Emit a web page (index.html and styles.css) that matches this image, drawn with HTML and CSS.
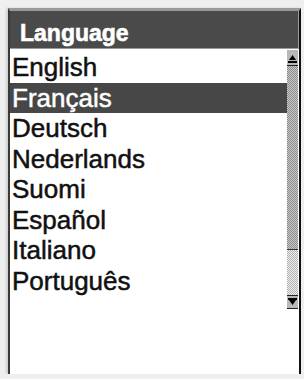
FILE: index.html
```html
<!DOCTYPE html>
<html>
<head>
    <meta charset="UTF-8">
    <title>Language</title>
    <link rel="stylesheet" href="styles.css">
</head>
<body>
<div class="panel">
    <div class="title">Language</div>
    <div class="body">
        <ul class="list">
            <li>English</li>
            <li class="on">Français</li>
            <li>Deutsch</li>
            <li>Nederlands</li>
            <li>Suomi</li>
            <li>Español</li>
            <li>Italiano</li>
            <li>Português</li>
        </ul>
        <div class="scroll">
            <div class="arrow">
                <svg width="11" height="15" viewBox="0 0 11 15"><polygon points="2,10 9,10 5.5,5" fill="#000"/><rect x="1" y="11" width="9" height="2" fill="#000"/></svg>
            </div>
            <div class="thumb"></div>
            <div class="track"></div>
            <div class="arrow down">
                <svg width="11" height="13" viewBox="0 0 11 13"><rect x="1" y="2" width="9" height="2" fill="#000"/><polygon points="2,4 9,4 5.5,9" fill="#000"/></svg>
            </div>
        </div>
    </div>
</div>
</body>
</html>
```

FILE: styles.css
```css
* {
    margin: 0;
    padding: 0;
    box-sizing: border-box;
}

ul, li {
    list-style: none;
}

body {
    background: #efefef;
    font-family: "Liberation Sans", Arial, sans-serif;
}

.panel {
    display: flex;
    flex-direction: column;
    margin: 8px 0 0 8px;
    width: 293px;
    height: 366px;
    background: #fff;
    border-top: 3px solid #9a9a9a;
    border-left: 2px solid #3a3a3a;
    border-right: 2px solid #111;
    box-shadow: -2px 0 2px #cfcfcf;
}

.title {
    height: 38px;
    padding: 7px 0 0 10px;
    background: #4a4a4a;
    border-bottom: 1px solid #9a9a9a;
    border-right: 1px solid #9a9a9a;
    color: #fff;
    font-size: 23px;
    font-weight: bold;
    line-height: 30px;
    -webkit-text-stroke: 0.6px #fff;
}

.body {
    display: flex;
    flex: 1;
    align-items: flex-start;
}

.list {
    flex: 1;
    padding-top: 3px;
}

.list li {
    height: 30.5px;
    padding-left: 2px;
    color: #111;
    font-size: 26px;
    line-height: 30px;
    -webkit-text-stroke: 0.5px #111;
}

.list li.on {
    background: #474747;
    color: #fff;
    -webkit-text-stroke: 0.5px #fff;
}

.scroll {
    display: flex;
    flex-direction: column;
    width: 11px;
    margin: 1px 1px 0 0;
}

.arrow {
    height: 16px;
    background: #b8b8b8;
    border-bottom: 1px solid #222;
}

.arrow svg {
    display: block;
}

.arrow.down {
    height: 14px;
    border-top: 1px solid #222;
}

.thumb {
    height: 184px;
    background: repeating-conic-gradient(#8c8c8c 0 25%, #c8c8c8 0 50%) 0 0 / 2px 2px;
    border-bottom: 1px solid #333;
}

.track {
    height: 45px;
    background: repeating-conic-gradient(#b4b4b4 0 25%, #ececec 0 50%) 0 0 / 2px 2px;
}
```
